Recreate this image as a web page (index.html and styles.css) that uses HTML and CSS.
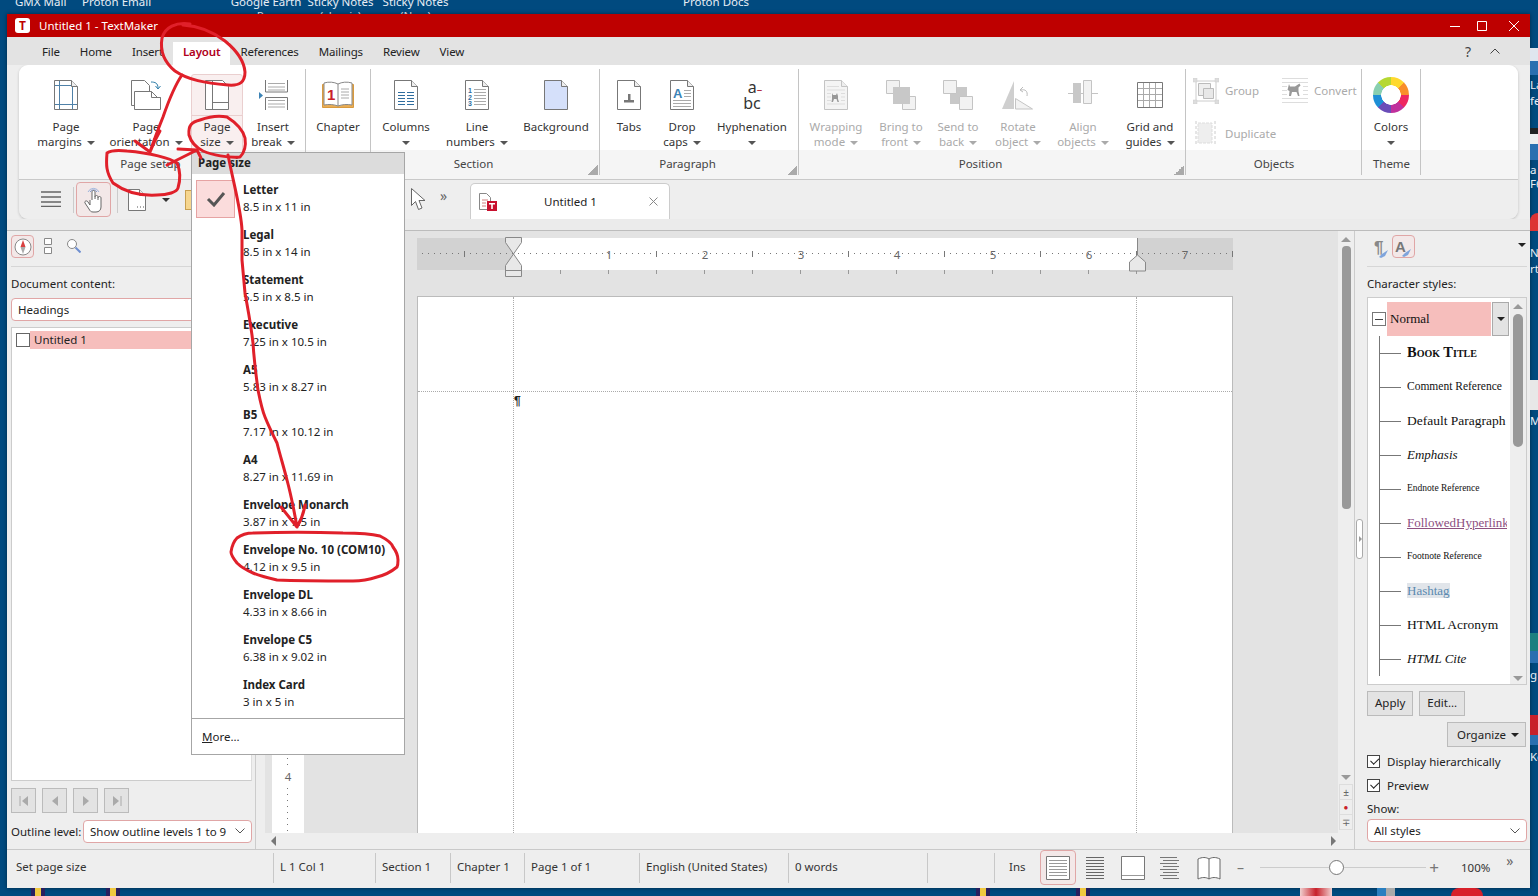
FILE: index.html
```html
<!DOCTYPE html>
<html lang="en">
<head>
<meta charset="utf-8">
<title>Untitled 1 - TextMaker</title>
<link rel="stylesheet" href="styles.css">
</head>
<body>
<div class="desktop">
  <div class="desk-top">
    <span class="dl">GMX Mail</span>
    <span class="dl">Proton Email</span>
    <span class="dl ctr">Google Earth<br>Pro</span>
    <span class="dl ctr">Sticky Notes<br>(classic)</span>
    <span class="dl ctr">Sticky Notes<br>(New)</span>
    <span class="dl dl6">Proton Docs</span>
  </div>
  <div class="desk-mid">
    <div class="window">
      <div class="titlebar">
        <span class="appicon">T</span>
        <span class="title">Untitled 1 - TextMaker</span>
        <span class="winbtns">
          <svg width="10" height="10" viewBox="0 0 10 10"><path d="M0 5.500h10" stroke="#fff" fill="none"/></svg>
          <svg width="10" height="10" viewBox="0 0 10 10"><path d="M.5.500h9v9h-9z" stroke="#fff" fill="none"/></svg>
          <svg width="10" height="10" viewBox="0 0 10 10"><path d="M0 0l10 10M10 0L0 10" stroke="#fff" fill="none"/></svg>
        </span>
      </div>
      <div class="menubar">
        <span class="mi">File</span><span class="mi">Home</span><span class="mi">Insert</span><span class="mi active">Layout</span><span class="mi">References</span><span class="mi">Mailings</span><span class="mi">Review</span><span class="mi">View</span>
        <span class="mright"><span class="help">?</span>
          <svg width="10" height="6" viewBox="0 0 10 6"><path d="M.5 5.500L5 1l4.500 4.500" stroke="#444" fill="none"/></svg></span>
      </div>
      <div class="ribbon">
        <div class="rtop">
          <div class="group g1">
            <div class="gb">
              <div class="btn"><svg class="ic" width="24" height="30" viewBox="0 0 24 30"><path d="M.5.500h17l6 6v23H.5z" fill="#fff" stroke="#777"/><path d="M17.500.5v6h6" fill="#eee" stroke="#777"/><path d="M5.500 1v28M18.500 7v22M1 5.500h16M1 24.500h22" stroke="#4f81a8" fill="none"/></svg><div class="lb">Page<br>margins<i class="c"></i></div></div>
              <div class="btn"><svg class="ic" width="30" height="30" viewBox="0 0 30 30"><path d="M.5.500h13l5 5v20H.5z" fill="#fff" stroke="#777"/><path d="M3.500 11.500h17l6 6 3 0v12h-26z" fill="#fff" stroke="#777"/><path d="M20.500 11.500v6h9" fill="none" stroke="#777"/><path d="M20 2c4 0 7 1 7 6m-2.500-2l2.500 3 2.500-3" fill="none" stroke="#2f7ea8"/></svg><div class="lb">Page<br>orientation<i class="c"></i></div></div>
              <div class="btn hot"><svg class="ic" width="24" height="30" viewBox="0 0 24 30"><path d="M.5.500h17l6 6v23H.5z" fill="#fff" stroke="#777"/><path d="M7.500 1v28M8 22.500h15" stroke="#777" fill="none"/></svg><div class="lb">Page<br>size<i class="c"></i></div></div>
              <div class="btn"><svg class="ic" width="30" height="30" viewBox="0 0 30 30"><path d="M1 12l4 3.500L1 19z" fill="#3c83b5"/><path d="M7.500 0v12h22V0M7.500 30V17.500h22V30" fill="none" stroke="#777"/><path d="M10 3.500h17M10 7h17M10 10h17M10 20.500h17M10 24h17M10 27h17" stroke="#aaa"/></svg><div class="lb">Insert<br>break<i class="c"></i></div></div>
            </div>
            <div class="gl lpad">Page setup</div>
          </div>
          <div class="group g2">
            <div class="gb">
              <div class="btn"><svg class="ic" width="32" height="30" viewBox="0 0 32 30"><path d="M.5 4.500h31v23h-31z" fill="#e9ad55" stroke="#d99a3e"/><path d="M2 3c5-1.500 10-1 14 1 4-2 9-2.500 14-1v22c-5-1-10-.5-14 1-4-1.500-9-2-14-1z" fill="#fff" stroke="#888"/><path d="M16 4v22" stroke="#888"/><text x="5" y="20" class="chnum">1</text><path d="M19 9h8M19 12h8M19 15h8M19 18h8" stroke="#aaa"/></svg><div class="lb">Chapter</div></div>
            </div>
            <div class="gl"></div>
          </div>
          <div class="group g3">
            <div class="gb">
              <div class="btn"><svg class="ic" width="24" height="30" viewBox="0 0 24 30"><path d="M.5.500h17l6 6v23H.5z" fill="#fff" stroke="#777"/><path d="M17.500.5v6h6" fill="#eee" stroke="#777"/><path d="M4 12.500h7M13 12.500h7M4 15.500h7M13 15.500h7M4 18.500h7M13 18.500h7M4 21.500h7M13 21.500h7M4 24.500h7M13 24.500h7" stroke="#2f6d9e"/></svg><div class="lb">Columns<br><i class="c solo"></i></div></div>
              <div class="btn"><svg class="ic" width="24" height="30" viewBox="0 0 24 30"><path d="M.5.500h17l6 6v23H.5z" fill="#fff" stroke="#777"/><path d="M17.500.5v6h6" fill="#eee" stroke="#777"/><text x="3" y="13" class="lnnum">1</text><text x="3" y="19.500" class="lnnum">2</text><text x="3" y="26" class="lnnum">3</text><path d="M9 9.500h12M9 12.500h12M9 15.500h12M9 18.500h12M9 21.500h12M9 24.500h12" stroke="#aaa"/></svg><div class="lb">Line<br>numbers<i class="c"></i></div></div>
              <div class="btn"><svg class="ic" width="24" height="30" viewBox="0 0 24 30"><path d="M.5.500h17l6 6v23H.5z" fill="#d5e0fa" stroke="#777"/><path d="M17.500.5v6h6" fill="#eee" stroke="#777"/></svg><div class="lb">Background</div></div>
            </div>
            <div class="gl lpad">Section</div>
            <i class="launcher"></i>
          </div>
          <div class="group g4">
            <div class="gb">
              <div class="btn"><svg class="ic" width="24" height="30" viewBox="0 0 24 30"><path d="M.5.500h17l6 6v23H.5z" fill="#fff" stroke="#777"/><path d="M17.500.5v6h6" fill="#eee" stroke="#777"/><path d="M7 20h10v2.500H7zM11 14h2.500v7H11z" fill="#777"/></svg><div class="lb">Tabs</div></div>
              <div class="btn"><svg class="ic" width="24" height="30" viewBox="0 0 24 30"><path d="M.5.500h17l6 6v23H.5z" fill="#fff" stroke="#777"/><path d="M17.500.5v6h6" fill="#eee" stroke="#777"/><text x="3" y="18" class="dropa">A</text><path d="M14 10.500h7M14 13.500h7M14 16.500h7M3 20.500h18M3 23.500h18M3 26.500h18" stroke="#aaa"/></svg><div class="lb">Drop<br>caps<i class="c"></i></div></div>
              <div class="btn"><div class="hyph"><span class="hy1">a<b class="hyr">–</b></span><span class="hy2">bc</span></div><div class="lb">Hyphenation<br><i class="c solo"></i></div></div>
            </div>
            <div class="gl lpad">Paragraph</div>
            <i class="launcher"></i>
          </div>
          <div class="group g5">
            <div class="gb">
              <div class="btn off"><svg class="ic" width="24" height="30" viewBox="0 0 24 30"><path d="M.5.500h17l6 6v23H.5z" fill="#f4f4f4" stroke="#c4c4c4"/><path d="M17.500.5v6h6" fill="#eee" stroke="#c4c4c4"/><path d="M3 6.500h12M3 10h18M3 13.500h4M17 13.500h4M3 17h4M17 17h4M3 20.500h4M17 20.500h4M3 24h18" stroke="#ddd"/><path d="M8 13l1 2h3l1-2 1 3v3l1 3h-1.500l-1-3h-2.500l-1 3H7.500l.5-3z" fill="#999"/></svg><div class="lb">Wrapping<br>mode<i class="c"></i></div></div>
              <div class="btn off"><svg class="ic" width="30" height="30" viewBox="0 0 30 30"><path d="M.5.500h13v13H.5zM16.500 16.500h13v13h-13z" fill="#f2f2f2" stroke="#c4c4c4"/><path d="M7 7h17v17H7z" fill="#c8c8c8"/></svg><div class="lb">Bring to<br>front<i class="c"></i></div></div>
              <div class="btn off"><svg class="ic" width="30" height="30" viewBox="0 0 30 30"><path d="M7 7h17v17H7z" fill="#c8c8c8"/><path d="M.5.500h13v13H.5zM16.500 16.500h13v13h-13z" fill="#f2f2f2" stroke="#c4c4c4"/></svg><div class="lb">Send to<br>back<i class="c"></i></div></div>
              <div class="btn off"><svg class="ic" width="32" height="30" viewBox="0 0 32 30"><path d="M12 1v28H0z" fill="#cfcfcf"/><path d="M13.500 18.500l17 10.500h-17z" fill="#f2f2f2" stroke="#c4c4c4"/><path d="M25 16c1-5-2-7-6-6m2-3l-3 3 3 2" fill="none" stroke="#bbb"/></svg><div class="lb">Rotate<br>object<i class="c"></i></div></div>
              <div class="btn off"><svg class="ic" width="30" height="30" viewBox="0 0 30 30"><path d="M0 13.500h30" stroke="#c4c4c4"/><path d="M5 3h8v20H5z" fill="#c8c8c8"/><path d="M15.500.5h8v23h-8z" fill="#f2f2f2" stroke="#c4c4c4"/></svg><div class="lb">Align<br>objects<i class="c"></i></div></div>
              <div class="btn"><svg class="ic" width="26" height="30" viewBox="0 0 26 30"><path d="M.5 2.500h25v25H.5z" fill="#fff" stroke="#777"/><path d="M6.500 3v24M12.500 3v24M18.500 3v24M1 8.500h24M1 14.500h24M1 20.500h24" stroke="#aaa"/></svg><div class="lb">Grid and<br>guides<i class="c"></i></div></div>
            </div>
            <div class="gl lpad">Position</div>
            <i class="launcher"></i>
          </div>
          <div class="group g6">
            <div class="gb objs">
              <div class="obj"><svg width="26" height="26" viewBox="0 0 26 26"><path d="M3 3h20v20H3z" fill="none" stroke="#ccc"/><path d="M5.500 5.500h12v12h-12z" fill="#eee" stroke="#bbb"/><path d="M10.500 10.500h10v10h-10z" fill="#e8e8e8" stroke="#bbb"/><path d="M0 0h4v4H0zM22 0h4v4h-4zM0 22h4v4H0zM22 22h4v4h-4z" fill="#ddd" stroke="#ccc" stroke-width=".5"/></svg><span>Group</span></div>
              <div class="obj"><svg width="26" height="26" viewBox="0 0 26 26"><path d="M0 .5h26M0 4.500h26M0 8.500h5M21 8.500h5M0 12.500h5M21 12.500h5M0 16.500h5M21 16.500h5M0 20.500h26M0 24.500h26" stroke="#ddd"/><path d="M7 6l1 2.500h5l3-2 1.500-1 1 2-2 2v4l1 4.500h-1.500l-1.500-4h-4.500l-1 4H7l.5-5-2-1z" fill="#999"/></svg><span>Convert</span></div>
              <div class="obj"><svg width="26" height="26" viewBox="0 0 26 26"><path d="M5 3h14v20H5z" fill="#eee" stroke="#ddd" stroke-dasharray="3 1"/><path d="M22 1v23M3 1v23" fill="none" stroke="#ccc" stroke-dasharray="3 2"/></svg><span>Duplicate</span></div>
            </div>
            <div class="gl">Objects</div>
          </div>
          <div class="group g7">
            <div class="gb">
              <div class="btn"><div class="wheel"></div><div class="lb">Colors<br><i class="c solo"></i></div></div>
            </div>
            <div class="gl">Theme</div>
          </div>
          <div class="rfill"><div class="gb"></div><div class="gl"></div></div>
        </div>
        <div class="toolbar">
          <svg class="tb-burger" width="20" height="16" viewBox="0 0 20 16"><path d="M0 1h20M0 6h20M0 11h20M0 15.500h20" stroke="#666" stroke-width="1.500"/></svg>
          <i class="tsep"></i>
          <div class="handbtn"><svg width="20" height="28" viewBox="0 0 20 28"><path d="M4 6a6 6 0 0 1 11 0" fill="none" stroke="#9db4dc"/><path d="M6 6a4 4 0 0 1 7 0" fill="none" stroke="#7f9ad0"/><path d="M8 14V6c0-2 3-2 3 0v7m0-2c0-2 3-2 3 0v3m0-2c0-2 3-2 3 0v9c0 3-2 5-5 5H9c-2 0-3-1-4-3l-4-6c-1-2 2-3 3-1l2 3V14" fill="#fff" stroke="#666"/></svg></div>
          <i class="tsep"></i>
          <svg class="tb-doc" width="18" height="22" viewBox="0 0 18 22"><path d="M.5.500h11l6 6v15H.5z" fill="#fff" stroke="#777"/><path d="M11.500.5v6h6" fill="#eee" stroke="#777"/><path d="M9 18h1M12 18h1M15 18h1" stroke="#555"/></svg>
          <i class="c tb-car"></i>
          <i class="tb-folder"></i>
          <svg class="tb-arrow" width="15" height="23" viewBox="0 0 15 23"><path d="M.5.500v17l4-4 3 8 3.500-1.500-3-7.500H14z" fill="#fff" stroke="#666"/></svg>
          <span class="tb-more">»</span>
          <div class="doctab">
            <svg width="18" height="18" viewBox="0 0 18 18"><path d="M.5.500h7l4 4v12H.5z" fill="#fff" stroke="#888"/><path d="M3 7h6M3 10h4M3 13h4" stroke="#d08080"/><path d="M8 8h10v10H8z" fill="#c8102e"/><path d="M10 10h6v1.500h-2.200V16h-1.600v-4.500H10z" fill="#fff"/></svg>
            <span class="dt">Untitled 1</span>
            <svg width="9" height="9" viewBox="0 0 9 9"><path d="M.5.500l8 8M8.500.5l-8 8" stroke="#888" fill="none"/></svg>
          </div>
        </div>
      </div>
      <div class="strip"></div>
      <div class="panels">
        <div class="left">
          <div class="ptools">
            <span class="pbtn"><svg width="18" height="18" viewBox="0 0 18 18"><circle cx="9" cy="9" r="8" fill="#fff" stroke="#888"/><path d="M9 2l2.500 7h-5z" fill="#d94040"/><path d="M9 16l2.500-7h-5z" fill="#aaa"/></svg></span>
            <svg class="pt2" width="8" height="16" viewBox="0 0 8 16"><path d="M.5.500h7v6h-7zM.5 9.500h7v6h-7z" fill="#fff" stroke="#888"/></svg>
            <svg class="pt3" width="15" height="15" viewBox="0 0 15 15"><circle cx="6" cy="6" r="4.500" fill="#fff" stroke="#888"/><path d="M9.500 9.500l5 5" stroke="#6f8fd0" stroke-width="2"/></svg>
          </div>
          <div class="pcap">Document content:</div>
          <div class="sel headings">Headings</div>
          <div class="tree">
            <div class="trow"><i class="chk"></i><span class="tsel">Untitled 1</span></div>
          </div>
          <div class="nav">
            <span class="navb"><svg width="10" height="10" viewBox="0 0 10 10"><path d="M1 0v10" stroke="#aaa"/><path d="M9 0v10L3 5z" fill="#aaa"/></svg></span>
            <span class="navb"><svg width="10" height="10" viewBox="0 0 10 10"><path d="M8 0v10L2 5z" fill="#aaa"/></svg></span>
            <span class="navb"><svg width="10" height="10" viewBox="0 0 10 10"><path d="M2 0v10l6-5z" fill="#aaa"/></svg></span>
            <span class="navb"><svg width="10" height="10" viewBox="0 0 10 10"><path d="M9 0v10" stroke="#aaa"/><path d="M1 0v10l6-5z" fill="#aaa"/></svg></span>
          </div>
          <div class="outl"><span class="ollab">Outline level:</span><div class="sel olsel">Show outline levels 1 to 9<svg width="10" height="6" viewBox="0 0 10 6"><path d="M.5.500L5 5l4.500-4.500" stroke="#555" fill="none"/></svg></div></div>
        </div>
        <div class="center">
          <div class="cmain">
            <div class="view">
              <div class="hwrap">
                <div class="hruler">
                  <span class="rspace"></span><span class="rn">1</span><span class="rn">2</span><span class="rn">3</span><span class="rn">4</span><span class="rn">5</span><span class="rn">6</span><span class="rn">7</span>
                </div>
                <div class="tabticks"></div>
                <svg class="hand-l" width="18" height="40" viewBox="0 0 18 40"><path d="M.5.500h16v5L8.500 17 .5 5.500zM8.500 17l8 11.500v11h-16v-11zM.5 33.500h16" fill="#e8e8e8" stroke="#888"/></svg>
                <svg class="hand-r" width="18" height="34" viewBox="0 0 18 34"><path d="M8.500 0v17" stroke="#888"/><path d="M8.500 17l8 7v9h-16v-9z" fill="#e8e8e8" stroke="#888"/></svg>
              </div>
              <div class="vruler"><span class="vn">4</span></div>
              <div class="page"><div class="margins"><span class="pilcrow">¶</span></div></div>
            </div>
            <div class="vscroll">
              <i class="up"></i><i class="thumb"></i><i class="sp"></i><i class="dn"></i>
              <div class="vbtns"><span>±</span><span class="dot">●</span><span>∓</span></div>
            </div>
          </div>
          <div class="hscroll"><i class="lf"></i><i class="rt"></i></div>
        </div>
        <div class="right">
          <span class="rhandle"></span>
          <div class="ptools rtools">
            <span class="pil">¶<svg class="brush" width="11" height="9" viewBox="0 0 11 9"><path d="M1 8l3-3 6-4-3 6-4 2z" fill="#7fa4dc"/></svg></span>
            <span class="pbtn abtn">A<svg class="brush" width="11" height="9" viewBox="0 0 11 9"><path d="M1 8l3-3 6-4-3 6-4 2z" fill="#7fa4dc"/></svg></span>
            <i class="c rtcar"></i>
          </div>
          <div class="pcap">Character styles:</div>
          <div class="stylebox">
            <div class="stylelist">
              <div class="srow0"><i class="minus"></i><span class="snorm">Normal</span><span class="sdrop"><i class="c dk"></i></span></div>
              <div class="sitems">
                <div class="si s-book">Book Title</div>
                <div class="si s-sm">Comment Reference</div>
                <div class="si s-md">Default Paragraph Font</div>
                <div class="si s-em">Emphasis</div>
                <div class="si s-xs">Endnote Reference</div>
                <div class="si s-link">FollowedHyperlink</div>
                <div class="si s-xs">Footnote Reference</div>
                <div class="si s-hash"><span>Hashtag</span></div>
                <div class="si s-md">HTML Acronym</div>
                <div class="si s-em">HTML Cite</div>
              </div>
            </div>
            <div class="sscroll"><i class="up"></i><i class="sthumb"></i><i class="sp"></i><i class="dn"></i></div>
          </div>
          <div class="btnrow"><span class="pb">Apply</span><span class="pb">Edit...</span></div>
          <div class="orgrow"><span class="pb org">Organize<i class="c dk"></i></span></div>
          <div class="cbrow cb1"><i class="cb"></i>Display hierarchically</div>
          <div class="cbrow cb2"><i class="cb"></i>Preview</div>
          <div class="showcap">Show:</div>
          <div class="sel allsel">All styles<svg width="10" height="6" viewBox="0 0 10 6"><path d="M.5.500L5 5l4.500-4.500" stroke="#555" fill="none"/></svg></div>
        </div>
      </div>
      <div class="status">
        <span class="st s1">Set page size</span>
        <span class="st s2">L 1 Col 1</span>
        <span class="st s3">Section 1</span>
        <span class="st s4">Chapter 1</span>
        <span class="st s5">Page 1 of 1</span>
        <span class="st s6">English (United States)</span>
        <span class="st s7">0 words</span>
        <span class="st s8"></span>
        <span class="st s9">Ins</span>
        <span class="vwon"><svg width="24" height="24" viewBox="0 0 24 24"><path d="M.5.500h23v23H.5z" fill="#fff" stroke="#777"/><path d="M3 4.500h18M3 7.500h18M3 10.500h18M3 13.500h18M3 16.500h18M3 19.500h18" stroke="#999"/></svg></span>
        <svg class="vw v2" width="18" height="24" viewBox="0 0 18 24"><path d="M0 1.500h18M0 4.500h18M0 7.500h18M0 10.500h18M0 13.500h18M0 16.500h18M0 19.500h18M0 22.500h18" stroke="#666"/></svg>
        <svg class="vw v3" width="24" height="24" viewBox="0 0 24 24"><path d="M.5.500h23v23H.5z" fill="#fff" stroke="#777"/><path d="M1 19.500h22" stroke="#999"/></svg>
        <svg class="vw v4" width="20" height="24" viewBox="0 0 20 24"><path d="M0 1.500h17M3 4.500h16M0 7.500h17M3 10.500h16M0 13.500h17M3 16.500h16M0 19.500h17M3 22.500h16" stroke="#777"/></svg>
        <svg class="vw v5" width="24" height="24" viewBox="0 0 24 24"><path d="M1 3c4-2 8-2 11 0 3-2 7-2 11 0v20c-4-2-8-2-11 0-3-2-7-2-11 0z" fill="#fff" stroke="#666"/><path d="M12 3v20" stroke="#666"/></svg>
        <span class="zm">–</span>
        <span class="slider"><i class="knob"></i></span>
        <span class="zp">+</span>
        <span class="zv">100%</span>
        <span class="zmore">»</span>
      </div>
    </div>
    <div class="desk-right">
      <i class="dr a1"></i><span class="dt1 t1">La</span><span class="dt1 t2">fe</span><i class="dr a2"></i><span class="dt1 t3">a</span><span class="dt1 t4">F6</span><i class="dr a3"></i>
      <span class="dt1 t5">N</span><span class="dt1 t6">rt</span><i class="dr a4"></i><span class="dt1 t7">M</span><i class="dr a5"></i><span class="dt1 t8">g</span><i class="dr a6"></i><span class="dt1 t9">Ko</span>
    </div>
  </div>
  <div class="desk-bottom">
    <i class="db b1"></i><i class="db b2"></i><i class="db b3"></i><i class="db b4"></i><i class="db b5"></i><i class="db b6"></i><i class="db b7"></i>
  </div>
</div>

<div class="popup">
  <div class="phead">Page size</div>
  <div class="pitems">
    <div class="pi"><span class="pchk"><svg width="20" height="16" viewBox="0 0 20 16"><path d="M2 8l6 6L18 2" fill="none" stroke="#555" stroke-width="3"/></svg></span><div class="pt"><b>Letter</b><span>8.5 in x 11 in</span></div></div>
    <div class="pi"><div class="pt"><b>Legal</b><span>8.5 in x 14 in</span></div></div>
    <div class="pi"><div class="pt"><b>Statement</b><span>5.5 in x 8.5 in</span></div></div>
    <div class="pi"><div class="pt"><b>Executive</b><span>7.25 in x 10.5 in</span></div></div>
    <div class="pi"><div class="pt"><b>A5</b><span>5.83 in x 8.27 in</span></div></div>
    <div class="pi"><div class="pt"><b>B5</b><span>7.17 in x 10.12 in</span></div></div>
    <div class="pi"><div class="pt"><b>A4</b><span>8.27 in x 11.69 in</span></div></div>
    <div class="pi"><div class="pt"><b>Envelope Monarch</b><span>3.87 in x 7.5 in</span></div></div>
    <div class="pi"><div class="pt"><b>Envelope No. 10 (COM10)</b><span>4.12 in x 9.5 in</span></div></div>
    <div class="pi"><div class="pt"><b>Envelope DL</b><span>4.33 in x 8.66 in</span></div></div>
    <div class="pi"><div class="pt"><b>Envelope C5</b><span>6.38 in x 9.02 in</span></div></div>
    <div class="pi"><div class="pt"><b>Index Card</b><span>3 in x 5 in</span></div></div>
  </div>
  <div class="pmore"><u>M</u>ore...</div>
</div>

<svg class="ink" width="1538" height="896" viewBox="0 0 1538 896">
  <g fill="none" stroke="#e0202a" stroke-width="3" stroke-linecap="round" stroke-linejoin="round">
    <path d="M190 24C176 22 165 27 162 38C160 50 164 62 175 71C188 80 205 83 228 85C240 86 245 82 245 72C244 60 236 50 225 41C212 31 200 26 183 25"/>
    <path d="M182 75C175 85 170 97 163 117C159 127 155 137 150 152M150 152L135 141M150 152C153 144 156 138 160 131"/>
    <path d="M107 153C106 165 106 172 113 183C125 192 140 196 157 195C168 195 177 192 178 188C181 178 180 170 177 163C170 158 150 153 127 151C118 150 110 151 107 153"/>
    <path d="M167 165C177 160 187 155 197 150M197 150L178 149M197 150L201 158"/>
    <path d="M200 120C192 122 188 125 189 135C191 142 195 147 203 151C212 155 228 158 240 157C245 152 246 145 245 138C243 130 238 124 227 117C218 115 208 117 200 120"/>
    <path d="M228 155C235 190 241 210 242 230C242 240 242 250 242 260C243 272 244 283 245 293C248 310 251 325 253 343C254 360 256 375 258 390C260 400 262 410 265 417C269 427 273 435 277 443C280 455 284 468 287 480C291 495 294 510 297 527M297 527L281 507M297 527C301 520 304 512 305 505"/>
    <path d="M253 533C280 532 315 532 343 533C360 533 372 534 380 536C388 540 392 544 393 547C396 551 398 555 398 560C398 563 398 565 397 567C391 572 385 575 377 577C368 580 362 581 353 581C330 581 300 581 277 580C268 578 260 576 253 573C246 570 241 567 237 563C233 558 231 555 231 552C232 545 234 541 237 538C241 535 247 533 253 533"/>
  </g>
</svg>
</body>
</html>
```
FILE: styles.css
```css
* { box-sizing: border-box; }
html, body { margin: 0; padding: 0; }
body { width: 1538px; height: 896px; overflow: hidden; background: #014a7f; font: 11.500px/15px "Noto Sans", "Open Sans", sans-serif; color: #222; position: relative; }
i { display: block; font-style: normal; }
svg { display: block; flex: none; }

.desktop { width: 1538px; height: 896px; display: flex; flex-direction: column; }
.desk-top { height: 14px; flex: none; overflow: hidden; display: grid; padding-left: 15px; grid-template-columns: 67px 147px 74px 75px 75px 1fr; }
.dl { color: #e8eef5; line-height: 14px; margin-top: -5px; white-space: nowrap; }
.ctr { text-align: center; }
.dl6 { margin-left: 230px; }

.desk-mid { height: 874px; flex: none; display: flex; }
.window { width: 1523px; margin-left: 7px; height: 874px; flex: none; display: flex; flex-direction: column; background: #eee; box-shadow: 0 0 4px rgba(0,0,0,.45); }
.desk-right { flex: 1; position: relative; overflow: hidden; }
.desk-bottom { height: 8px; flex: none; position: relative; overflow: hidden; }

.titlebar { height: 23px; flex: none; background: #be0000; color: #fff; display: flex; align-items: center; padding-left: 8px; }
.appicon { width: 15px; height: 15px; background: #fff; color: #be0000; font-weight: 700; font-size: 12px; line-height: 15px; text-align: center; border-radius: 3px; }
.title { margin-left: 9px; }
.winbtns { margin-left: auto; display: flex; gap: 22px; padding-right: 11px; }
.winbtns svg:first-child { margin-right: -5px; }

.menubar { height: 28px; flex: none; background: #e3e3e3; display: flex; align-items: flex-end; padding-left: 25px; position: relative; letter-spacing: -.15px; }
.mi { padding: 0 10px; height: 23px; line-height: 19px; }
.mi.active { background: #fff; color: #b00020; font-weight: 600; }
.mright { margin-left: auto; display: flex; align-items: center; gap: 19px; padding-right: 30px; height: 28px; }
.help { font-size: 14px; color: #444; }

.ribbon { margin: 0 12px; height: 154px; border-radius: 9px; background: #eee; box-shadow: 0 1px 3px rgba(0,0,0,.2); overflow: hidden; flex: none; }
.rtop { height: 115px; display: flex; border-bottom: 1px solid #c9c9c9; }
.group { position: relative; flex: none; }
.group::after { content: ""; position: absolute; right: 0; top: 4px; bottom: 4px; width: 1px; background: #c4c4c4; }
.g1 { width: 287px; } .g2 { width: 65px; } .g3 { width: 229px; } .g4 { width: 199px; } .g5 { width: 387px; } .g6 { width: 176px; } .g7 { width: 59px; }
.rfill { flex: 1; }
.gb { height: 85px; background: #fff; display: grid; }
.gl { height: 29px; background: #f5f5f5; text-align: center; line-height: 28px; color: #444; }
.lpad { padding-right: 24px; }
.g1 .gb { padding-left: 11px; grid-template-columns: 72px 88px 54px 58px; }
.g2 .gb { grid-template-columns: 64px; }
.g3 .gb { grid-template-columns: 70px 72px 86px; }
.g4 .gb { grid-template-columns: 58px 48px 92px; }
.g5 .gb { grid-template-columns: 74px 56px 58px 62px 68px 66px; }
.g7 .gb { grid-template-columns: 58px; }
.btn { padding-top: 15px; text-align: center; position: relative; isolation: isolate; white-space: nowrap; }
.ic { margin: 0 auto; height: 30px; }
.lb { margin-top: 9px; line-height: 15px; color: #333; }
.off .lb { color: #aaa; }
.off .c { border-top-color: #aaa; }
.c { display: inline-block; width: 0; height: 0; border: 4px solid transparent; border-top-color: #555; border-bottom: 0; margin-left: 5px; vertical-align: middle; }
.c.solo { margin-left: 0; }
.hot::before { content: ""; position: absolute; z-index: -1; left: 1px; right: 1px; top: 9px; height: 41px; background: #f9efef; border: 1px solid #eacfcf; border-radius: 3px; }
.hot::after { content: ""; position: absolute; z-index: -1; left: 1px; right: 1px; top: 50px; bottom: 0; background: #f9efef; border: 1px solid #eacfcf; border-bottom: 0; }
.chnum { font: 700 15px "Liberation Sans", sans-serif; fill: #c8202a; }
.lnnum { font: 700 7px "Liberation Sans", sans-serif; fill: #2f6d9e; }
.dropa { font: 700 13px "Liberation Sans", sans-serif; fill: #3c83b5; }
.hyph { height: 30px; display: flex; flex-direction: column; align-items: center; font-size: 16px; line-height: 15px; color: #333; }
.hy1 { padding-left: 6px; }
.hyr { color: #b02030; font-weight: 400; font-size: 11px; }
.launcher { position: absolute; right: 2px; bottom: 4px; width: 10px; height: 10px; background: linear-gradient(135deg, transparent 50%, #aaa 50%); }
.objs { grid-template-columns: 89px 1fr; grid-template-rows: 43px 42px; padding: 4px 0 0 7px; align-items: center; height: 85px; }
.obj { display: flex; align-items: center; gap: 6px; color: #aaa; white-space: nowrap; }
.wheel { width: 36px; height: 36px; margin: -3px auto -3px; border-radius: 50%; background: radial-gradient(circle, #fff 0 9.500px, transparent 10px), conic-gradient(#ffd92e 0 45deg, #f98e2a 45deg 90deg, #ee2660 90deg 135deg, #c0309c 135deg 180deg, #6a4cb8 180deg 225deg, #1e8fd6 225deg 270deg, #88cfb0 270deg 315deg, #b5d832 315deg 360deg); }

.toolbar { height: 39px; display: flex; align-items: center; background: #eee; padding-left: 22px; position: relative; }
.tb-burger { margin-top: -1px; }
.tsep { width: 1px; height: 26px; background: #ccc; margin: 0 2px 0 12px; }
.tsep + .handbtn { margin-right: 6px; }
.handbtn { width: 35px; height: 35px; border: 1px solid #e0a6a6; border-radius: 4px; background: #f3e8e8; display: flex; align-items: center; justify-content: center; }
.handbtn + .tsep { margin: 0 10px 0 0; }
.c.tb-car { margin-left: 16px; border-top-color: #333; }
.tb-folder { width: 8px; height: 20px; background: #f6d68e; border: 1px solid #c9a050; border-right: 0; margin-left: 15px; }
.tb-arrow { margin-left: 218px; }
.tb-more { margin-left: 14px; width: 10px; margin-top: -8px; color: #666; font-size: 14px; }
.doctab { margin-left: 20px; width: 200px; height: 36px; margin-top: 3px; background: #fff; border: 1px solid #ccc; border-bottom: 0; border-radius: 5px 5px 0 0; display: flex; align-items: center; padding: 0 11px 0 8px; }
.dt { margin-left: 47px; margin-right: auto; }

.strip { height: 11px; background: #ebebeb; flex: none; }
.panels { height: 619px; display: flex; border-top: 1px solid #bcbcbc; flex: none; }
.left { width: 249px; border-right: 1px solid #ccc; padding: 0 3px 0 4px; display: flex; flex-direction: column; flex: none; }
.ptools { height: 36px; border-bottom: 1px solid #d6d6d6; display: flex; align-items: flex-start; padding-top: 4px; flex: none; }
.pbtn { width: 23px; height: 23px; border: 1px solid #e0a6a6; border-radius: 4px; background: #f3e8e8; display: flex; align-items: center; justify-content: center; }
.pt2 { margin: 3px 0 0 10px; }
.pt3 { margin: 3px 0 0 14px; }
.pcap { height: 31px; line-height: 33px; flex: none; }
.sel { border: 1px solid #e0a6a6; border-radius: 4px; background: #fff; height: 23px; line-height: 19px; display: flex; align-items: center; justify-content: space-between; padding: 0 6px; flex: none; white-space: nowrap; }
.tree { margin-top: 6px; height: 454px; border: 1px solid #ccc; border-right-color: #ddd; background: #fff; padding: 3px; flex: none; }
.trow { display: flex; align-items: center; height: 18px; }
.chk { width: 14px; height: 14px; border: 1px solid #666; margin-left: 1px; background: #fff; flex: none; }
.tsel { flex: 1; margin-left: 0; background: #f6bebc; line-height: 18px; padding-left: 4px; }
.nav { margin-top: 7px; display: flex; gap: 6px; height: 25px; flex: none; }
.navb { width: 25px; height: 25px; background: #e3e3e3; border: 1px solid #bbb; display: flex; align-items: center; justify-content: center; }
.outl { margin-top: 6px; display: flex; align-items: center; height: 24px; flex: none; }
.ollab { width: 72px; white-space: nowrap; flex: none; }
.olsel { width: 169px; }

.center { flex: 1; min-width: 0; display: flex; flex-direction: column; padding-left: 9px; }
.cmain { flex: 1; min-height: 0; display: flex; }
.view { flex: 1; min-width: 0; background: #e3e3e3; overflow: hidden; display: grid; grid-template-columns: 32px 816px; column-gap: 113px; grid-template-rows: 36px 1fr; row-gap: 22px; padding: 7px 0 0 7px; }
.hwrap { grid-column: 2; grid-row: 1; position: relative; }
.hruler { height: 32px; display: flex; align-items: center; color: #666; background:
  repeating-linear-gradient(90deg, transparent 0 5px, #777 5px 6px) 0 15px / 100% 1px no-repeat,
  linear-gradient(90deg, #d2d2d2 0 96px, #fff 96px 720px, #d2d2d2 720px); }
.rspace { width: 144px; height: 15px; flex: none; position: relative; }
.rspace::after { content: ""; position: absolute; right: 96px; top: 4px; width: 1px; height: 6px; background: #777; }
.rn { width: 96px; flex: none; text-align: center; position: relative; }
.rn::after { content: ""; position: absolute; left: 95px; top: 4px; width: 1px; height: 6px; background: #777; }
.tabticks { height: 4px; margin: 0 96px; background: repeating-linear-gradient(90deg, transparent 0 47px, #999 47px 48px); }
.hand-l { position: absolute; left: 88px; top: -1px; }
.hand-r { position: absolute; left: 712px; top: 0; }
.vruler { grid-column: 1; grid-row: 2; background: #fff; position: relative; color: #666; display: flex; flex-direction: column; justify-content: flex-end; align-items: center; padding-bottom: 49px; }
.vruler::after { content: ""; position: absolute; left: 15px; bottom: 0; height: 80px; width: 1px; background: repeating-linear-gradient(transparent 0 5px, #777 5px 6px); }
.vn { background: #fff; position: relative; z-index: 1; }
.page { grid-column: 2; grid-row: 2; background: #fff; border: 1px solid #bbb; border-bottom: 0; position: relative; padding: 0 95px; }
.page::before { content: ""; position: absolute; left: 0; right: 0; top: 94px; border-top: 1px dotted #aaa; }
.margins { height: 100%; border-left: 1px dotted #aaa; border-right: 1px dotted #aaa; padding-top: 98px; }
.pilcrow { display: block; font: 700 12px/12px "Liberation Sans", sans-serif; color: #222; }
.vscroll { width: 16px; background: #eee; display: flex; flex-direction: column; align-items: center; padding-top: 6px; }
.up { width: 0; height: 0; border: 5px solid transparent; border-bottom-color: #999; border-top: 0; flex: none; }
.dn { width: 0; height: 0; border: 5px solid transparent; border-top-color: #999; border-bottom: 0; flex: none; }
.thumb { width: 9px; height: 263px; margin-top: 4px; background: #999; border-radius: 4px; flex: none; }
.sp { flex: 1; }
.vbtns { margin-top: 4px; margin-bottom: 3px; width: 14px; display: flex; flex-direction: column; border: 1px solid #ddd; color: #666; font-size: 10px; line-height: 14px; text-align: center; flex: none; }
.dot { color: #c8202a; font-size: 8px; border-top: 1px solid #ddd; border-bottom: 1px solid #ddd; }
.hscroll { height: 16px; background: #eee; display: flex; align-items: center; justify-content: space-between; padding: 0 18px 0 6px; flex: none; }
.lf { width: 0; height: 0; border: 5px solid transparent; border-right-color: #777; border-left: 0; }
.rt { width: 0; height: 0; border: 5px solid transparent; border-left-color: #777; border-right: 0; }

.right { width: 176px; flex: none; border-left: 1px solid #ccc; padding: 0 3px 0 12px; display: flex; flex-direction: column; position: relative; }
.rhandle { position: absolute; left: 1px; top: 288px; width: 7px; height: 40px; background: #fff; border: 1px solid #aaa; border-radius: 3px; }
.rhandle::after { content: ""; position: absolute; left: 2px; top: 16px; border: 3px solid transparent; border-left-color: #999; border-right: 0; }
.pil { font: 700 17px/20px "Liberation Sans", sans-serif; color: #888; margin-left: 7px; width: 18px; height: 23px; display: flex; align-items: flex-end; }
.abtn { font: 700 15px/20px "Liberation Sans", sans-serif; color: #777; align-items: center; }
.brush { margin: 0 0 0 -5px; align-self: flex-end; }
.c.rtcar { margin: 8px 1px 0 auto; border-top-color: #222; }
.stylebox { height: 388px; margin-top: -1px; border: 1px solid #ccc; display: flex; flex: none; }
.stylelist { flex: 1; background: #fff; overflow: hidden; padding-top: 4px; min-width: 0; font-family: "Liberation Serif", serif; font-size: 13px; color: #111; }
.srow0 { height: 34px; display: flex; align-items: center; padding-left: 4px; }
.minus { width: 14px; height: 14px; border: 1px solid #777; background: linear-gradient(#444, #444) center / 8px 1px no-repeat #fff; flex: none; }
.snorm { margin-left: 1px; width: 104px; height: 34px; line-height: 34px; background: #f6bebc; padding-left: 3px; flex: none; }
.sdrop { width: 17px; height: 34px; margin-left: 1px; background: #e3e3e3; border: 1px solid #aaa; display: flex; align-items: center; justify-content: center; flex: none; }
.c.dk { margin: 0; border-top-color: #222; }
.sitems { margin-left: 11px; margin-right: 3px; border-left: 1px solid #777; }
.si { height: 34px; line-height: 33px; padding-left: 27px; position: relative; white-space: nowrap; overflow: hidden; }
.si::before { content: ""; position: absolute; left: 0; top: 17px; width: 21px; height: 1px; background: #777; }
.s-book { font-weight: 700; font-variant: small-caps; font-size: 14.500px; }
.s-sm { font-size: 11.500px; }
.s-md { font-size: 13.500px; }
.s-em { font-style: italic; }
.s-xs { font-size: 9.500px; }
.s-link { color: #8d4f7f; text-decoration: underline; }
.s-hash span { background: #e1e5ea; color: #5b8ab0; }
.sscroll { width: 16px; background: #eee; display: flex; flex-direction: column; align-items: center; padding: 6px 0 3px; }
.sthumb { width: 10px; height: 133px; margin-top: 5px; background: #999; border-radius: 5px; flex: none; }
.btnrow { margin-top: 6px; display: flex; gap: 6px; height: 25px; flex: none; }
.pb { height: 25px; padding: 0 7px; background: #e3e3e3; border: 1px solid #bbb; line-height: 22px; text-align: center; }
.orgrow { margin-top: 6px; display: flex; justify-content: flex-end; margin-right: 1px; flex: none; }
.org { width: 79px; display: flex; align-items: center; justify-content: space-between; padding-right: 6px; padding-left: 9px; }
.cbrow { height: 16px; display: flex; align-items: center; gap: 7px; flex: none; }
.cb1 { margin-top: 6px; }
.cb2 { margin-top: 8px; }
.cb { width: 13px; height: 13px; border: 1px solid #444; background: #fff; position: relative; flex: none; }
.cb::after { content: ""; position: absolute; left: 2px; top: 1px; width: 7px; height: 4px; border-left: 1px solid #222; border-bottom: 1px solid #222; transform: rotate(-45deg) translate(0, 1px); }
.showcap { margin-top: 7px; height: 19px; line-height: 17px; flex: none; }

.status { height: 39px; border-top: 1px solid #c9c9c9; display: flex; align-items: center; background: #eee; flex: none; color: #333; padding-bottom: 3px; }
.st { height: 30px; line-height: 28px; border-left: 1px solid #c8c8c8; padding-left: 6px; flex: none; white-space: nowrap; }
.s1 { width: 266px; border-left: 0; padding-left: 9px; }
.s2 { width: 102px; } .s3 { width: 75px; } .s4 { width: 74px; } .s5 { width: 115px; } .s6 { width: 149px; } .s7 { width: 139px; } .s8 { width: 67px; }
.s9 { width: 46px; padding-left: 14px; }
.vwon { width: 36px; height: 35px; border: 1px solid #e0a6a6; border-radius: 4px; display: flex; align-items: center; justify-content: center; background: #f3e8e8; flex: none; }
.v2 { margin-left: 10px; } .v3 { margin-left: 17px; } .v4 { margin-left: 15px; } .v5 { margin-left: 17px; }
.zm { margin-left: 16px; color: #777; font-size: 14px; width: 11px; flex: none; }
.slider { margin-left: 12px; width: 166px; height: 1px; background: #ccc; position: relative; flex: none; }
.knob { position: absolute; left: 69px; top: -7px; width: 15px; height: 15px; border: 1px solid #777; border-radius: 50%; background: #fff; }
.zp { margin-left: 1px; width: 14px; color: #777; font-size: 17px; text-align: center; flex: none; }
.zv { margin-left: 20px; color: #333; flex: none; }
.zmore { margin-left: 16px; margin-top: -14px; color: #666; font-size: 14px; flex: none; }

.dr { position: absolute; left: 0; width: 8px; }
.dt1 { position: absolute; left: 0; color: #e8eef5; line-height: 14px; }
.a1 { top: 34px; height: 27px; background: linear-gradient(#dfe6ef 0 50%, #2a6fb0 50%); }
.t1 { top: 64px; } .t2 { top: 80px; }
.a2 { top: 114px; height: 32px; background: linear-gradient(#222 0 20%, #eee 20% 50%, #2a6fb0 50%); }
.t3 { top: 149px; } .t4 { top: 163px; }
.a3 { top: 199px; height: 18px; background: #d33; border-radius: 8px 0 0 0; }
.t5 { top: 232px; } .t6 { top: 248px; }
.a4 { top: 366px; height: 30px; background: #e8e8e8; }
.t7 { top: 400px; }
.a5 { top: 619px; height: 30px; background: linear-gradient(#1c7f80 0 60%, #2a6fb0 60%); }
.t8 { top: 654px; }
.a6 { top: 701px; height: 30px; background: linear-gradient(#c8202a 0 65%, #2a6fb0 65%); }
.t9 { top: 736px; }
.db { position: absolute; top: 0; height: 8px; }
.b1, .b2, .b3, .b4 { width: 14px; background: linear-gradient(90deg, #2a1f5f 0 30%, #f0c840 30% 70%, #2a1f5f 70%); }
.b1 { left: 31px; } .b2 { left: 106px; } .b3 { left: 976px; } .b4 { left: 1076px; }
.b5 { left: 1300px; width: 32px; background: linear-gradient(90deg, #f0d0d0, #c8202a 50%, #f0d0d0); }
.b6 { left: 1377px; width: 18px; background: linear-gradient(90deg, #2a7fc0 50%, #aaa 50%); }
.b7 { left: 1451px; width: 32px; background: #d8202a; border-radius: 16px 16px 0 0; }

.popup { position: absolute; left: 191px; top: 152px; width: 214px; height: 603px; background: #fff; border: 1px solid #a6a6a6; display: flex; flex-direction: column; }
.phead { height: 21px; background: #dcdcdc; font-weight: 700; line-height: 20px; padding-left: 6px; flex: none; }
.pitems { height: 545px; flex: none; border-bottom: 1px solid #a6a6a6; }
.pi { height: 45px; position: relative; padding-left: 51px; padding-top: 7px; }
.pt { display: flex; flex-direction: column; line-height: 18px; white-space: nowrap; }
.pt span { margin-top: -1px; }
.pchk { position: absolute; left: 4px; top: 6px; width: 39px; height: 38px; background: #fbdcdc; border: 1px solid #e6a3a3; display: flex; align-items: center; justify-content: center; }
.pmore { padding: 10px 0 0 10px; line-height: 15px; }
.ink { position: absolute; left: 0; top: 0; pointer-events: none; }
```
